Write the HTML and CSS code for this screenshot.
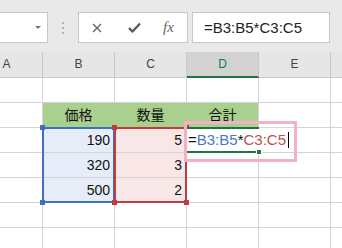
FILE: index.html
```html
<!DOCTYPE html>
<html lang="ja">
<head>
<meta charset="utf-8">
<link rel="stylesheet" href="styles.css">
</head>
<body>
<div class="app">
  <div class="toolbar">
    <div class="namebox"><span class="arrow"></span></div>
    <div class="grip"><i></i><i></i><i></i></div>
    <div class="fbuttons">
      <svg class="ic-x" width="10" height="10" viewBox="0 0 10 10"><path d="M1 1L9 9M9 1L1 9" stroke="#666" stroke-width="1.4" fill="none"/></svg>
      <svg class="ic-ok" width="13" height="11" viewBox="0 0 13 11"><path d="M1 6L4.5 9.5L12 1.5" stroke="#555" stroke-width="2.2" fill="none"/></svg>
      <span class="fx">fx</span>
    </div>
    <div class="finput">=B3:B5*C3:C5</div>
  </div>
  <div class="sheet">
    <div class="cells">
      <div class="c h">A</div><div class="c h">B</div><div class="c h">C</div><div class="c h sel">D</div><div class="c h">E</div><div class="c h"></div>
      <div class="c"></div><div class="c"></div><div class="c"></div><div class="c"></div><div class="c"></div><div class="c"></div>
      <div class="c"></div><div class="c g j">価格</div><div class="c g j">数量</div><div class="c g">合計</div><div class="c"></div><div class="c"></div>
      <div class="c"></div><div class="c n b">190</div><div class="c n r">5</div><div class="c"></div><div class="c"></div><div class="c"></div>
      <div class="c"></div><div class="c n b">320</div><div class="c n r">3</div><div class="c"></div><div class="c"></div><div class="c"></div>
      <div class="c"></div><div class="c n b">500</div><div class="c n r">2</div><div class="c"></div><div class="c"></div><div class="c"></div>
      <div class="c"></div><div class="c"></div><div class="c"></div><div class="c"></div><div class="c"></div><div class="c"></div>
      <div class="c"></div><div class="c"></div><div class="c"></div><div class="c"></div><div class="c"></div><div class="c"></div>
    </div>
    <div class="overlay">
      <div class="rng blue"><i class="hd tl"></i><i class="hd bl"></i></div>
      <div class="rng red"><i class="hd tl"></i><i class="hd tr"></i><i class="hd bl"></i><i class="hd br"></i></div>
      <div class="act"><span class="edit">=<span class="rb">B3:B5</span>*<span class="rr">C3:C5</span><span class="caret"></span></span><i class="fh"></i></div>
    </div>
  </div>
  <div class="note"></div>
</div>
</body>
</html>
```
FILE: styles.css
```css
body {
  margin: 0;
  overflow: hidden;
  background: #fff;
  font-family: "Liberation Sans", "Noto Sans CJK JP", sans-serif;
}
.app {
  position: relative;
  width: 342px;
  height: 248px;
  overflow: hidden;
}
.toolbar {
  height: 52px;
  background: #e9e9e9;
  display: flex;
  align-items: flex-start;
  padding-top: 12px;
  box-sizing: border-box;
}
.namebox {
  flex: none;
  width: 61px;
  height: 31px;
  margin-left: -13px;
  background: #fff;
  border: 1px solid #c6c6c6;
  box-sizing: border-box;
  display: flex;
  justify-content: flex-end;
  align-items: center;
  padding-right: 6px;
}
.arrow {
  width: 0;
  height: 0;
  border-left: 3px solid transparent;
  border-right: 3px solid transparent;
  border-top: 3px solid #777;
}
.grip {
  flex: none;
  margin-left: 14px;
  margin-top: 10px;
  display: flex;
  flex-direction: column;
  gap: 3px;
}
.grip i {
  display: block;
  width: 2px;
  height: 2px;
  background: #b5b5b5;
}
.fbuttons {
  flex: none;
  margin-left: 14px;
  width: 110px;
  height: 31px;
  background: #fff;
  border: 1px solid #c6c6c6;
  box-sizing: border-box;
  display: flex;
  align-items: center;
  padding-left: 13px;
}
.ic-ok { margin-left: 26px; }
.fx {
  margin-left: 22px;
  font-family: "Liberation Serif", serif;
  font-style: italic;
  font-size: 15px;
  color: #666;
}
.finput {
  flex: none;
  margin-left: 4px;
  width: 138px;
  height: 31px;
  background: #fff;
  border: 1px solid #c6c6c6;
  box-sizing: border-box;
  padding-left: 11px;
  font-size: 15px;
  line-height: 29px;
  color: #222;
}
.sheet {
  display: grid;
  margin-left: -29px;
}
.cells, .overlay {
  grid-area: 1 / 1;
  display: grid;
  grid-template-columns: repeat(6, 72px);
  grid-template-rows: 26px repeat(7, 25px);
}
.c {
  border-right: 1px solid #d4d4d4;
  border-bottom: 1px solid #d4d4d4;
  box-sizing: border-box;
  font-size: 14px;
  line-height: 24px;
  padding: 0 4px;
  white-space: nowrap;
  overflow: hidden;
  color: #111;
}
.h {
  background: #e6e6e6;
  border-right-color: #c8c8c8;
  border-bottom-color: #c8c8c8;
  text-align: center;
  font-size: 12px;
  line-height: 25px;
  color: #444;
}
.h.sel {
  background: #d2d2d2;
  color: #217346;
  border-bottom: 2px solid #217346;
  line-height: 24px;
}
.n { text-align: right; }
.g {
  background: #a9d08e;
  text-align: center;
  font-size: 14px;
}
.g.j { border-right-color: #a9d08e; }
.b { background: #e6edf8; }
.r { background: #f9e6e6; }
.rng {
  position: relative;
  margin: -1px 0 0 -1px;
  border: 2px solid;
}
.rng.blue {
  grid-column: 2;
  grid-row: 4 / 7;
  border-color: #3f6fbf;
  color: #3f6fbf;
}
.rng.red {
  grid-column: 3;
  grid-row: 4 / 7;
  border-color: #bc3c3f;
  color: #bc3c3f;
}
.hd {
  position: absolute;
  width: 5px;
  height: 5px;
  background: currentColor;
}
.hd.tl { left: -4px; top: -4px; }
.hd.tr { right: -4px; top: -4px; }
.hd.bl { left: -4px; bottom: -4px; }
.hd.br { right: -4px; bottom: -4px; }
.act {
  grid-column: 4;
  grid-row: 4;
  margin-top: -1px;
  border-top: 2px solid #217346;
  border-bottom: 2px solid #217346;
  position: relative;
  z-index: 2;
  white-space: nowrap;
}
.edit {
  display: inline-block;
  background: #fff;
  font-size: 15px;
  line-height: 21px;
  padding: 0 3px 0 1px;
  color: #111;
}
.rb { color: #4a77c4; }
.rr { color: #c0504d; }
.caret {
  display: inline-block;
  width: 1px;
  height: 16px;
  background: #000;
  margin-left: 2px;
  vertical-align: -3px;
}
.fh {
  position: absolute;
  right: -3px;
  bottom: -4px;
  width: 4px;
  height: 4px;
  background: #217346;
  border: 1px solid #fff;
}
.note {
  position: absolute;
  left: 184px;
  top: 121px;
  width: 113px;
  height: 41px;
  border: 3px solid #f4b0c8;
  box-sizing: border-box;
  z-index: 5;
}
```
